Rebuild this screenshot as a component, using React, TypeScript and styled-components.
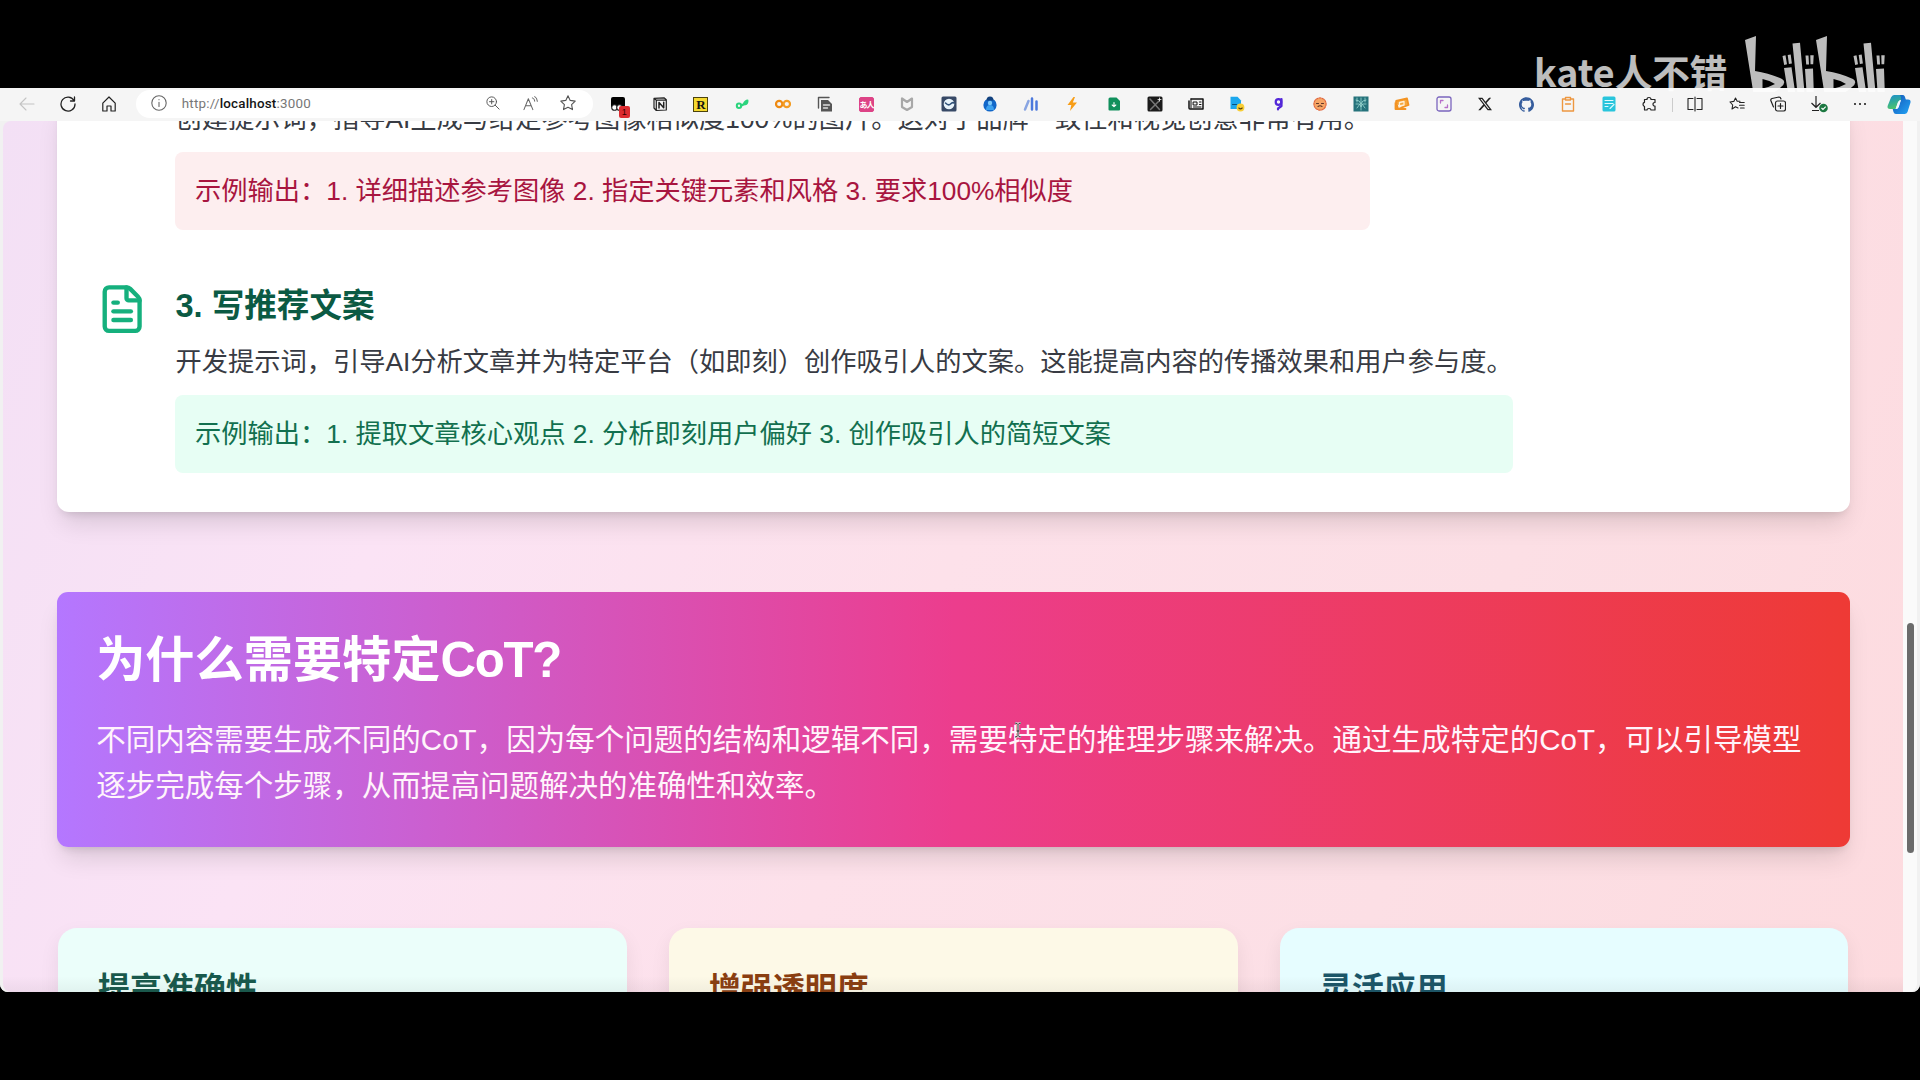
import React from "react";
import styled, { createGlobalStyle } from "styled-components";
import { SiGithub, SiX } from "react-icons/si";
import { FileText } from "lucide-react";

const Global = createGlobalStyle`
  * { box-sizing: border-box; }
  html, body { margin: 0; background: #000; }
  body { font-family: "Liberation Sans", "Noto Sans CJK SC", sans-serif; }
`;

const Screen = styled.div`
  position: relative;
  width: 1920px;
  height: 1080px;
  padding: 88px 0;
  background: #000;
  overflow: hidden;
`;

const BrowserWindow = styled.div`
  display: flex;
  flex-direction: column;
  height: 904px;
  background: #f5f5f5;
  border-radius: 0 0 8px 8px;
  overflow: hidden;
`;

const Toolbar = styled.div`
  display: flex;
  align-items: center;
  flex: none;
  height: 33px;
  padding-left: 6px;
`;

const Slot = styled.div<{ $w?: number }>`
  position: relative;
  display: flex;
  align-items: center;
  justify-content: center;
  flex: none;
  width: ${(p) => p.$w ?? 41.28}px;
  height: 32px;
  padding-bottom: 1px;
`;

const AddressBar = styled.div`
  display: flex;
  align-items: center;
  flex: none;
  width: 457px;
  height: 28px;
  margin: -2px 5px 0 6px;
  background: #fff;
  border-radius: 14px;
`;

const Url = styled.div`
  flex: 1;
  font: 13.4px/18px Roboto, "Liberation Sans", sans-serif;
  letter-spacing: 0.2px;
  color: #777;
  b { font-weight: 500; color: #151515; }
`;

const Divider = styled.div`
  width: 1px;
  height: 14px;
  margin: 0 2px 0 1px;
  background: #ccc;
`;

const Badge = styled.div`
  position: absolute;
  left: 21px;
  top: 17px;
  width: 11px;
  height: 12px;
  border-radius: 2px;
  background: #dc2b30;
  color: #300;
  font-size: 9px;
  line-height: 12px;
  text-align: center;
`;

const Tile = styled.div<{ $bg: string; $fg: string; $serif?: boolean; $edge?: string }>`
  width: 15px;
  height: 15px;
  border-radius: ${(p) => (p.$serif ? 0 : 2)}px;
  border: 1px solid ${(p) => p.$edge ?? p.$bg};
  background: ${(p) => p.$bg};
  color: ${(p) => p.$fg};
  font: bold ${(p) => (p.$serif ? 13 : 8)}px/13px ${(p) => (p.$serif ? '"Liberation Serif", serif' : '"Noto Sans CJK SC", sans-serif')};
  text-align: center;
  white-space: nowrap;
  letter-spacing: ${(p) => (p.$serif ? 0 : -1)}px;
`;

const Viewport = styled.div`
  display: flex;
  flex: 1;
  min-height: 0;
  padding: 0 3px;
  background: #f1f1f1;
`;

const Page = styled.main`
  position: relative;
  flex: 1;
  height: 871px;
  padding: 0 53.5px 0 54px;
  overflow: hidden;
  border-radius: 8px 0 0 8px;
  background: linear-gradient(112deg, #f3e0f5 0%, #fbe3f5 24%, #fde1ea 50%, #fcdfe5 75%, #fddbdf 100%);
  &::after {
    content: "";
    position: absolute;
    inset: auto 0 0 0;
    height: 16px;
    background: linear-gradient(transparent, rgba(60, 60, 60, 0.06));
  }
`;

const ScrollTrack = styled.div`
  flex: none;
  width: 14px;
  padding: 502px 3px 0 4px;
  background: #fafafa;
  border-radius: 0 0 8px 0;
`;

const ScrollThumb = styled.div`
  height: 230px;
  border-radius: 4px;
  background: #6b6b6b;
`;

const shadow = "0 16px 24px -5px rgba(0,0,0,.12), 0 6px 10px -5px rgba(0,0,0,.14)";

const ExamplesCard = styled.section`
  display: flex;
  flex-direction: column;
  gap: 53px;
  height: 412px;
  margin-top: -21px;
  padding: 0 39.2px;
  border-radius: 0 0 12px 12px;
  background: #fff;
  box-shadow: ${shadow};
`;

const Example = styled.article`
  display: flex;
  align-items: flex-start;
  gap: 27px;
`;

const IconSpace = styled.div`
  flex: none;
  width: 52.3px;
  height: 52.3px;
  svg { display: block; }
`;

const ExampleBody = styled.div`
  display: flex;
  flex-direction: column;
`;

const ExampleTitle = styled.h3`
  margin: 0 0 14px;
  font-size: 32.6px;
  line-height: 46px;
  font-weight: 700;
  color: #0b5a43;
`;

const ExampleText = styled.p`
  margin: 0;
  font-size: 26.26px;
  line-height: 39.2px;
  color: #383b43;
  white-space: nowrap;
`;

const Output = styled.div<{ $bg: string; $fg: string }>`
  margin-top: 12.800px;
  padding: 20px 19.6px 19px;
  border-radius: 8px;
  background: ${(p) => p.$bg};
  color: ${(p) => p.$fg};
  font-size: 26.26px;
  line-height: 39.2px;
  white-space: nowrap;
`;

const Banner = styled.section`
  height: 255px;
  margin-top: 80px;
  padding: 39.2px;
  border-radius: 11px;
  color: #fff;
  background: linear-gradient(90deg, #b477ff 0%, #ec3d8d 50%, #ee3a35 100%);
  box-shadow: ${shadow};
`;

const BannerTitle = styled.h2`
  margin: 0 0 27px;
  font-size: 49.2px;
  line-height: 58.8px;
  font-weight: 700;
  span { letter-spacing: -1.3px; }
`;

const BannerText = styled.p`
  margin: 0;
  font-size: 29.53px;
  line-height: 45.7px;
  color: #fff4fb;
`;

const Benefits = styled.section`
  display: grid;
  grid-template-columns: repeat(3, 1fr);
  gap: 42px;
  margin-top: 81px;
  padding: 0 1px;
`;

const Benefit = styled.article<{ $bg: string; $fg: string }>`
  height: 200px;
  padding: 39px 40px;
  border-radius: 19px;
  background: ${(p) => p.$bg};
  color: ${(p) => p.$fg};
  font-size: 32px;
  line-height: 45px;
  font-weight: 700;
  box-shadow: 0 8px 20px rgba(0, 0, 0, 0.07);
`;

const Watermark = styled.div`
  position: absolute;
  left: 1534px;
  top: 36px;
  display: flex;
  opacity: 0.74;
  color: #fff;
  font: 700 37.6px/54px "Noto Sans CJK SC", sans-serif;
  pointer-events: none;
`;

const WatermarkName = styled.div`
  width: 211px;
  height: 62px;
  padding-top: 8px;
  white-space: nowrap;
`;

const Cursor = styled.svg`
  position: absolute;
  left: 1013px;
  top: 721px;
`;

type IcoProps = { children: React.ReactNode; s?: number; c?: string; w?: number };
const Ico = ({ children, s = 16, c = "#222", w = 1.1 }: IcoProps) => (
  <svg width={s} height={s} viewBox="0 0 16 16" fill="none" stroke={c} strokeWidth={w} strokeLinecap="round" strokeLinejoin="round">
    {children}
  </svg>
);

const starPath = "M8 .8l2.2 4.6 5 .7-3.6 3.5.9 5L8 12.2l-4.5 2.4.9-5L.8 6.1l5-.7z";

const extensions: React.ReactNode[] = [
  <>
    <Ico><path d="M1 3q0-2 2-2h10q2 0 2 2v8H1z" fill="#000" stroke="none" /><circle cx="4.500" cy="11.500" r="2.800" fill="#fff" /><circle cx="9.500" cy="11.500" r="2.800" fill="#fff" /></Ico>
    <Badge>1</Badge>
  </>,
  <Ico w={1.2}><path d="M2 2.3 12 1.8l2.3 2V14l-10 .5L2 12zM2 2.3l2.3 1.9 10-.4M4.3 4.2v10.3" /><path d="M7 12V6.5l4.7 5.2V6.3" strokeWidth="1.5" /></Ico>,
  <Tile $bg="#f5d92f" $fg="#111" $serif $edge="#4c430d">R</Tile>,
  <Ico c="#2bd47d" w={2}><circle cx="5" cy="9.7" r="2.2" /><path d="M7 9.5q2 0 3-2 1.5-3 3.5-3M9.5 8.5q3.500 0 4-3" /></Ico>,
  <Ico c="#ee8a12" w={2.2}><circle cx="4.2" cy="8" r="3.200" /><circle cx="11.800" cy="8" r="3.200" stroke="#f39c24" /></Ico>,
  <Ico c="#555" w={1.4}><path d="M1.500 12V1.500H12" /><path d="M4 4h7l4 4v7.500H4z" fill="#555" stroke="none" /><path d="M6.500 9h6M6.500 12h4" stroke="#ddd" /></Ico>,
  <Tile $bg="#dd4386" $fg="#fff">あ人</Tile>,
  <Ico c="#a8a8a8" w={2.200}><path d="M3 2.500v8.500l5 3 5-3V2.500L8 6z" /></Ico>,
  <Ico><rect x=".5" y=".5" width="15" height="15" rx="1.500" fill="#374966" stroke="none" /><circle cx="8" cy="8" r="5.300" fill="#e8f3fa" stroke="none" /><path d="M4.500 7q3 3 5 1t3.500-1" stroke="#2f5179" strokeWidth="1.600" /></Ico>,
  <Ico><circle cx="8" cy="9" r="6.600" fill="#1167c9" stroke="none" /><path d="M4.500 4.500q0-4 3.500-4t3.500 4z" fill="#12427f" stroke="none" /><circle cx="8" cy="7" r="2.200" fill="#7cc9fb" stroke="none" /><path d="M4 14q0-5 4-5t4 5z" fill="#3ca1ef" stroke="none" /></Ico>,
  <Ico c="#4b78dc" w={2.500}><path d="M2 13.500 5.500 5" stroke="#89a5e2" /><path d="M9 2.500v11M13.500 5.500v8" /></Ico>,
  <Ico><path d="M9.500 1 3.500 9h3.800L6 15l7-8.500H8.800L11 1z" fill="#f79d17" stroke="none" /></Ico>,
  <Ico><path d="M2.500 3q0-1.500 1.500-1.500h6.500L14 5v8.500q0 1-1 1H3.500q-1 0-1-1z" fill="#10905c" stroke="none" /><path d="M8 6.500v4M6.200 9 8 10.700 9.800 9" stroke="#fff" /></Ico>,
  <Ico><rect x=".5" y=".5" width="15" height="15" rx="1.500" fill="#1b1b1b" stroke="none" /><path d="m3 3 9.500 10.500M12 5 3.500 13.500" stroke="#777" strokeWidth="1.500" /><path d="M12.500 2v3M11 3.500h3" stroke="#fff" strokeWidth=".8" /></Ico>,
  <Ico c="#111" w={1.500}><path d="M3 3h12v10H2q-1 0-1-1V5" /><path d="M5.500 6H9v3H5.500zM11.500 6h1.500M11.500 8.500h1.500M5.500 11h7.500M3 3v9" strokeWidth="1" /></Ico>,
  <Ico><path d="M1.500.8h7L12 4.500V13H1.500z" fill="#1ba7ed" stroke="none" /><path d="M3.500 8.500h4" stroke="#07517d" /><circle cx="11.500" cy="11.500" r="3.900" fill="#f8ce35" stroke="none" /><path d="M9.800 12q1.700 1.700 3.400 0" stroke="#574008" /></Ico>,
  <Ico c="#5327d8" w={2.200}><circle cx="7.500" cy="6" r="2.800" /><path d="M10.500 3v7L7 12.500v1" /></Ico>,
  <Ico><circle cx="8" cy="8" r="6.100" fill="#f6a565" stroke="#e16438" strokeDasharray="2 1" /><path d="M4.500 7.500h2M9.500 7.500h2M6 10.500q2-1.500 4 0" stroke="#603526" /></Ico>,
  <Ico><path d="M.5.5h15v15H.500z" fill="#25727b" stroke="none" /><path d="M8 2v12M3 4q4 0 5 4 1-4 5-4M3 8h3q2 0 2 3 0-3 2-3h3M4 12l3-4M12 12 9 8M4 2v4M12 2v4" stroke="#9dd9d3" strokeWidth=".8" /></Ico>,
  <Ico c="#f39322" w={1.800}><path d="m2 5 11-2.500 1.500 6.500L4 13zM1.500 7v6h10" fill="#f6a73d" /><path d="M5.500 6.500v3.500l4.500-1V5.500z" stroke="#fff0d8" strokeWidth="1.300" /></Ico>,
  <Ico c="#7a64bd" w={1.300}><rect x="1" y="1" width="14" height="14" rx="2" /><path d="M4.500 7V4.500H7M9 11.500h2.500V9" stroke="#b76fca" /></Ico>,
  <SiX size={14} color="#222" />,
  <SiGithub size={15} color="#365d9d" />,
  <Ico c="#ed9740" w={1.400}><path d="M5 3H2.500v12h11V3H11M5.500 1.500h5V4h-5zM5.500 8h5" /></Ico>,
  <Ico><rect x="1.500" y=".5" width="13" height="15" rx="1.500" fill="#29c5dc" stroke="none" /><path d="M4 4.500h8M4 7.500h8M4 10.500h3M9 12.500l4-4" stroke="#dffbff" /></Ico>,
  <Ico w={1.200}><path d="M5 3.500q0-2 2-2t2 2h4v3q-2 0-2 1.800T13 10v4H9q0-1.500-2-1.500T5 14H2.500v-3.500Q1 10 1 8.300t1.500-2V3.500z" /></Ico>,
];

const edgeTools: React.ReactNode[] = [
  <Ico><path d="M6 2.500H1v11h5M10 2.500h5v11h-5M8 1v14" /></Ico>,
  <Ico><path d="M9 12 6.500 10.800 3 13l.7-4L1 6l3.800-.6L6.500 2l1.700 3.200H11M10.500 6.500h4.700M10.500 9.200h4.700M11.500 12h3.700" /></Ico>,
  <Ico w={1.200}><rect x="5.500" y="5" width="10" height="10" rx="2" /><path d="M3.500 11 .8 4.500Q.500 3 2 2.500L9 1q1.500 0 2 2M10.500 7.500v5M8 10h5" /></Ico>,
  <svg width="20" height="18" viewBox="0 0 20 18" fill="none" stroke="#222" strokeWidth="1.200"><path d="M7 1v11M2.500 8 7 12.300 11.500 8M3 15.500h7" /><circle cx="14.500" cy="13" r="4.300" fill="#1c7841" stroke="none" /><path d="m12.500 13 1.500 1.500 2.700-2.800" stroke="#fff" /></svg>,
  <Ico><g fill="#222" stroke="none"><circle cx="3" cy="8" r="1.100" /><circle cx="8" cy="8" r="1.100" /><circle cx="13" cy="8" r="1.100" /></g></Ico>,
];

const Copilot = () => (
  <svg width="24" height="21" viewBox="0 0 24 21">
    <defs>
      <linearGradient id="cpA" x1="0" y1="0" x2="0.3" y2="1"><stop offset="0" stopColor="#1f8fd0" /><stop offset=".5" stopColor="#2fa99b" /><stop offset="1" stopColor="#4fc46e" /></linearGradient>
      <linearGradient id="cpB" x1="0" y1="0" x2="1" y2="1"><stop offset="0" stopColor="#1453b5" /><stop offset="1" stopColor="#22a5f6" /></linearGradient>
    </defs>
    <path d="M7 1h8q2 0 2.500 2l.8 3H14q-2 0-3 2l-2.500 7H3q-3 0-2.400-3L4 3.500Q5 1 7 1z" fill="url(#cpA)" />
    <path d="M13 1h2.500q2 0 2.500 2l.8 2.500H21q3 0 2.500 3L20.500 18q-.8 2-3 2H9q-2 0-2.500-2l-.8-3H9q2 0 2.800-2L14 6q.8-3-1-5z" fill="url(#cpB)" />
    <path d="M11 8.500Q12 6 14 6h-.2L11.500 13q-.8 2-2.500 2h-.2z" fill="#f3f8ff" />
  </svg>
);

const BiliHalf = ({ x }: { x: number }) => (
  <g transform={`translate(${x} 0)`}>
    <path fillRule="evenodd" d="M0 4 11 0 10 35Q24 37 37 43 42 46 36 51 26 61 9 61zM17.500 43v9.500q7-1.500 12.500-4.500-5-3.500-12.500-5z" />
    <path d="M39 32l7.500-.7L51 62l-7 1zM47.500 7.500l7.500-.7L60 62l-7 .6zM60 33l8-.5L69 62l-7 .5z" />
    <path d="M37.500 20l3-.7 1.500 9-2.800.7zM42.700 19l3-.6 1.200 9-3 .5zM60.500 19.500h3l.5 9h-2.800zM65.300 19.300h3.400l-.5 9h-2.700z" />
  </g>
);

export default function App() {
  return (
    <Screen>
      <Global />
      <BrowserWindow>
        <Toolbar>
          <Slot><Ico c="#c4c4c4"><path d="M15 8H1M7 2 1 8l6 6" /></Ico></Slot>
          <Slot><Ico w={1.3}><path d="M14 4.500A7 7 0 1 0 15 8M14.500 1v4h-4" /></Ico></Slot>
          <Slot><Ico w={1.200}><path d="M1.800 7.200 8 1l6.200 6.200V15H10v-5H6v5H1.800z" /></Ico></Slot>
          <AddressBar>
            <Slot $w={46}><Ico c="#666"><circle cx="8" cy="8" r="7.200" /><path d="M8 7.200V11.500M8 4.500v.2" /></Ico></Slot>
            <Url>http://<b>localhost</b>:3000</Url>
            <Slot $w={38}><Ico s={14} c="#555"><circle cx="6.500" cy="6.500" r="5.500" /><path d="M10.500 10.500 15 15M4 6.500h5M6.500 4v5" /></Ico></Slot>
            <Slot $w={38}><Ico s={15} c="#666"><path d="M1 14.500 5.700 3l4.800 11.500M2.800 10.500h6M10 2q2.300 1 2.500 3.500M12.500.700q2.500 1.300 2.800 5" /></Ico></Slot>
            <Slot $w={37}><Ico c="#555"><path d={starPath} /></Ico></Slot>
            <Slot $w={6} />
          </AddressBar>
          {extensions.map((icon, i) => <Slot key={i}>{icon}</Slot>)}
          <Divider />
          {edgeTools.map((icon, i) => <Slot key={i}>{icon}</Slot>)}
          <Slot $w={36}><Copilot /></Slot>
        </Toolbar>
        <Viewport>
          <Page>
            <ExamplesCard>
              <Example>
                <IconSpace />
                <ExampleBody>
                  <ExampleText>创建提示词，指导AI生成与给定参考图像相似度100%的图片。这对于品牌一致性和视觉创意非常有用。</ExampleText>
                  <Output $bg="#fdeeef" $fg="#a8153f">示例输出：1. 详细描述参考图像 2. 指定关键元素和风格 3. 要求100%相似度</Output>
                </ExampleBody>
              </Example>
              <Example>
                <IconSpace><FileText size={52.3} color="#15b07d" /></IconSpace>
                <ExampleBody>
                  <ExampleTitle>3. 写推荐文案</ExampleTitle>
                  <ExampleText>开发提示词，引导AI分析文章并为特定平台（如即刻）创作吸引人的文案。这能提高内容的传播效果和用户参与度。</ExampleText>
                  <Output $bg="#e7fef4" $fg="#12704f">示例输出：1. 提取文章核心观点 2. 分析即刻用户偏好 3. 创作吸引人的简短文案</Output>
                </ExampleBody>
              </Example>
            </ExamplesCard>
            <Banner>
              <BannerTitle>为什么需要特定<span>CoT?</span></BannerTitle>
              <BannerText>不同内容需要生成不同的CoT，因为每个问题的结构和逻辑不同，需要特定的推理步骤来解决。通过生成特定的CoT，可以引导模型逐步完成每个步骤，从而提高问题解决的准确性和效率。</BannerText>
            </Banner>
            <Benefits>
              <Benefit $bg="#ebfefa" $fg="#18594c">提高准确性</Benefit>
              <Benefit $bg="#fdf9e7" $fg="#8a3e10">增强透明度</Benefit>
              <Benefit $bg="#e6fdff" $fg="#1b5668">灵活应用</Benefit>
            </Benefits>
          </Page>
          <ScrollTrack><ScrollThumb /></ScrollTrack>
        </Viewport>
      </BrowserWindow>
      <Watermark>
        <WatermarkName>kate人不错</WatermarkName>
        <svg width="142" height="56" viewBox="0 0 142 56" fill="#fff">
          <BiliHalf x={0} />
          <BiliHalf x={71} />
        </svg>
      </Watermark>
      <Cursor width="10" height="18" viewBox="0 0 10 18" fill="none">
        <path d="M2 2q2.500 0 3 1.500Q5.500 2 8 2M5 3.500v11M2 16q2.500 0 3-1.500Q5.500 16 8 16M3.500 10h3" stroke="#fff" strokeWidth="2.200" />
        <path d="M2 2q2.500 0 3 1.500Q5.500 2 8 2M5 3.500v11M2 16q2.500 0 3-1.500Q5.500 16 8 16M3.500 10h3" stroke="#222" />
      </Cursor>
    </Screen>
  );
}
